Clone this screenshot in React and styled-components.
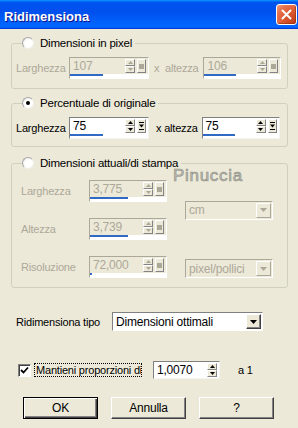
import React from "react";
import styled, { createGlobalStyle } from "styled-components";

const GlobalStyle = createGlobalStyle`
  html, body { margin: 0; padding: 0; background: #ece9d8; }
  body {
    font-family: "Liberation Sans", Arial, sans-serif;
    font-size: 11px;
    letter-spacing: -0.2px;
    color: #000;
  }
`;

const colors = {
  face: "#ece9d8",
  frame: "#d0d0bf",
  disabled: "#aca899",
  shadow: "#848284",
  dark: "#404040",
  bar: "#316ac5",
};

const Window = styled.div`
  position: relative;
  width: 298px;
  height: 428px;
  overflow: hidden;
  background: ${colors.face};
  display: flex;
  flex-direction: column;
`;

const TitleBar = styled.div`
  flex: none;
  height: 29px;
  box-sizing: border-box;
  padding: 0 1px 0 4px;
  display: flex;
  align-items: center;
  justify-content: space-between;
  background: linear-gradient(
    180deg,
    #0997ff,
    #0053ee 8%,
    #0050ee 40%,
    #06f 88%,
    #06f 93%,
    #005bff 95%,
    #003dd7 96%,
    #003dd7
  );
`;

const Title = styled.span`
  padding-top: 3px;
  font-size: 13px;
  font-weight: bold;
  letter-spacing: 0;
  color: #fff;
  text-shadow: 1px 1px 0 #0f1089;
`;

const CloseButton = styled.div`
  width: 21px;
  height: 21px;
  box-sizing: border-box;
  border: 1px solid #fff;
  border-radius: 3px;
  display: flex;
  align-items: center;
  justify-content: center;
  background: radial-gradient(
    circle at 85% 85%,
    #c4431c 0%,
    #de5a31 45%,
    #e8744f 75%,
    #f2a286 100%
  );
  box-shadow: inset -1px -1px 1px rgba(120, 30, 0, 0.5);
`;

const Body = styled.div`
  padding: 7px 10px 0 11px;
  display: flex;
  flex-direction: column;
`;

const Group = styled.fieldset`
  margin: 0 0 ${(p) => p.$mb}px 0;
  padding: ${(p) => p.$pt}px 6px ${(p) => p.$pb}px 3px;
  border: 1px solid ${colors.frame};
  border-radius: 3px;
  min-width: 0;
`;

const Legend = styled.legend`
  margin-left: 7px;
  padding: 0 3px 0 0;
  height: 14px;
  display: flex;
  align-items: center;
  gap: 6px;
  line-height: 14px;
  font-size: 11.5px;
`;

const Radio = styled.span`
  width: 12px;
  height: 12px;
  box-sizing: border-box;
  border-radius: 50%;
  border: 1px solid;
  border-color: #a7a6aa #f0f0ea #f0f0ea #a7a6aa;
  background: radial-gradient(circle at 65% 65%, #fff 45%, #e6e6e0 100%);
  display: flex;
  align-items: center;
  justify-content: center;

  &::after {
    content: "";
    width: 4px;
    height: 4px;
    border-radius: 50%;
    background: ${(p) => (p.$checked ? "#000" : "transparent")};
  }
`;

const Row = styled.div`
  display: flex;
  align-items: center;
  padding-left: ${(p) => p.$pl || 0}px;
`;

const Label = styled.span`
  width: ${(p) => (p.$w ? `${p.$w}px` : "auto")};
  flex: none;
  white-space: nowrap;
  font-size: 11px;
  color: ${(p) => (p.$disabled ? colors.disabled : "#000")};
`;

const XLabel = styled.span`
  margin: 0 ${(p) => p.$r}px 0 ${(p) => p.$l}px;
  white-space: nowrap;
  font-size: 11px;
  color: ${(p) => (p.$disabled ? colors.disabled : "#000")};
`;

const EditBox = styled.div`
  flex: none;
  width: ${(p) => p.$w}px;
  height: ${(p) => p.$h || 22}px;
  box-sizing: border-box;
  display: flex;
  flex-direction: column;
  border: 1px solid;
  border-color: ${(p) =>
    p.$disabled
      ? `${colors.disabled} #fff #fff ${colors.disabled}`
      : `#808080 #f4f4f0 #f4f4f0 #808080`};
  background: ${(p) => (p.$disabled ? colors.face : "#fff")};
`;

const EditRow = styled.div`
  flex: 1;
  display: flex;
  align-items: center;
  padding-right: 2px;
  gap: 2px;
`;

const EditValue = styled.span`
  flex: 1;
  padding-left: 3px;
  font-size: 12px;
  color: ${(p) => (p.$disabled ? colors.disabled : "#000")};
`;

const SpinCol = styled.div`
  width: 10px;
  display: flex;
  flex-direction: column;
`;

const SpinBtn = styled.div`
  height: 7px;
  box-sizing: border-box;
  display: flex;
  align-items: center;
  justify-content: center;
  background: ${colors.face};
  border: 1px solid;
  border-color: #fff ${colors.shadow} ${colors.shadow} #fff;
`;

const PopBtn = styled.div`
  width: 9px;
  height: 14px;
  box-sizing: border-box;
  display: flex;
  align-items: center;
  justify-content: center;
  background: ${colors.face};
  border: 1px solid;
  border-color: #fff ${colors.shadow} ${colors.shadow} #fff;
`;

const DisabledSquare = styled.span`
  width: 5px;
  height: 5px;
  background: ${colors.disabled};
`;

const BarTrack = styled.div`
  height: 4px;
  background: #fff;
  display: flex;
  align-items: flex-start;
`;

const BarFill = styled.div`
  height: 2px;
  background: ${colors.bar};
`;

const PrintGrid = styled.div`
  display: grid;
  grid-template-columns: 50px 78px 88px;
  grid-template-rows: 22px 22px 22px;
  column-gap: 18px;
  row-gap: 16px;
  padding-left: 6px;
  align-items: center;
`;

const ComboBox = styled.div`
  width: ${(p) => p.$w}px;
  height: ${(p) => p.$h || 19}px;
  box-sizing: border-box;
  display: flex;
  align-items: center;
  padding: 0 1px 0 3px;
  border: 1px solid;
  border-color: ${(p) =>
    p.$disabled
      ? `${colors.disabled} #fff #fff ${colors.disabled}`
      : `#808080 #fff #fff #808080`};
  background: ${(p) => (p.$disabled ? colors.face : "#fff")};
  grid-row: ${(p) => p.$row || "auto"};
  grid-column: ${(p) => p.$col || "auto"};
  align-self: ${(p) => p.$align || "center"};
`;

const ComboText = styled.span`
  flex: 1;
  font-size: 12px;
  color: ${(p) => (p.$disabled ? colors.disabled : "#000")};
`;

const DropButton = styled.div`
  width: 15px;
  height: 15px;
  box-sizing: border-box;
  display: flex;
  align-items: center;
  justify-content: center;
  background: ${colors.face};
  border: 1px solid;
  border-color: ${(p) =>
    p.$disabled ? `#fff ${colors.disabled} ${colors.disabled} #fff` : `#fff #404040 #404040 #fff`};
  box-shadow: ${(p) => (p.$disabled ? "none" : `inset -1px -1px 0 ${colors.shadow}`)};
`;

const TypeRow = styled.div`
  margin-top: 24px;
  padding-left: 5px;
  display: flex;
  align-items: center;
  gap: 12px;
`;

const CheckRow = styled.div`
  margin-top: 30px;
  padding-left: 7px;
  display: flex;
  align-items: center;
`;

const CheckBox = styled.span`
  width: 13px;
  height: 13px;
  box-sizing: border-box;
  flex: none;
  border: 1px solid;
  border-color: #808080 #fff #fff #808080;
  box-shadow: inset 1px 1px 0 #404040;
  background: #fff;
  display: flex;
  align-items: center;
  justify-content: center;
`;

const CheckLabel = styled.span`
  margin-left: 4px;
  margin-right: 12px;
  padding: 0 1px;
  width: 104px;
  overflow: hidden;
  white-space: nowrap;
  font-size: 11px;
  outline: 1px dotted #000;
  outline-offset: 0;
`;

const RatioSuffix = styled.span`
  margin-left: 18px;
  font-size: 11px;
`;

const ButtonRow = styled.div`
  margin-top: 18px;
  padding-left: 12px;
  display: flex;
  gap: 13px;
`;

const Button = styled.div`
  width: 75px;
  height: 22px;
  box-sizing: border-box;
  display: flex;
  align-items: center;
  justify-content: center;
  font-size: 12px;
  background: ${colors.face};
  border: 1px solid;
  border-color: ${(p) => (p.$default ? "#000" : `#fff #404040 #404040 #fff`)};
  box-shadow: ${(p) =>
    p.$default
      ? `inset 1px 1px 0 #fff, inset -1px -1px 0 #404040, inset -2px -2px 0 ${colors.shadow}`
      : `inset -1px -1px 0 ${colors.shadow}`};
`;

const Watermark = styled.span`
  position: absolute;
  left: 173px;
  top: 166px;
  font-size: 17px;
  letter-spacing: 0.7px;
  color: #bdbdb4;
  -webkit-text-stroke: 0.6px #8e8e86;
  pointer-events: none;
`;

const Arrow = ({ up, color = "#000" }) => (
  <svg width="5" height="3" viewBox="0 0 5 3">
    <path d={up ? "M2.5 0 L5 3 L0 3 Z" : "M0 0 L5 0 L2.5 3 Z"} fill={color} />
  </svg>
);

const PopGlyph = () => (
  <svg width="5" height="8" viewBox="0 0 5 8">
    <rect x="0" y="0" width="5" height="1" fill="#000" />
    <path d="M0 2.5 L5 2.5 L2.5 5.5 Z" fill="#000" />
    <rect x="0" y="7" width="5" height="1" fill="#000" />
  </svg>
);

const DropArrow = ({ color = "#000" }) => (
  <svg width="7" height="4" viewBox="0 0 7 4">
    <path d="M0 0 L7 0 L3.5 4 Z" fill={color} />
  </svg>
);

const SpinEdit = ({ value, w, fill, disabled, pop = true, bar = true, h }) => {
  const arrow = disabled ? colors.disabled : "#000";
  return (
    <EditBox $w={w} $h={h} $disabled={disabled}>
      <EditRow>
        <EditValue $disabled={disabled}>{value}</EditValue>
        <SpinCol>
          <SpinBtn>
            <Arrow up color={arrow} />
          </SpinBtn>
          <SpinBtn>
            <Arrow color={arrow} />
          </SpinBtn>
        </SpinCol>
        {pop && <PopBtn>{disabled ? <DisabledSquare /> : <PopGlyph />}</PopBtn>}
      </EditRow>
      {bar && (
        <BarTrack>
          <BarFill style={{ width: `${fill}%` }} />
        </BarTrack>
      )}
    </EditBox>
  );
};

const Combo = ({ text, w, disabled, row, col, align }) => (
  <ComboBox $w={w} $disabled={disabled} $row={row} $col={col} $align={align}>
    <ComboText $disabled={disabled}>{text}</ComboText>
    <DropButton $disabled={disabled}>
      <DropArrow color={disabled ? colors.disabled : "#000"} />
    </DropButton>
  </ComboBox>
);

const App = () => (
  <>
    <GlobalStyle />
    <Window>
      <TitleBar>
        <Title>Ridimensiona</Title>
        <CloseButton>
          <svg width="11" height="11" viewBox="0 0 11 11">
            <path d="M1.5 1.5 L9.5 9.5 M9.5 1.5 L1.5 9.5" stroke="#fff" strokeWidth="2" strokeLinecap="round" />
          </svg>
        </CloseButton>
      </TitleBar>

      <Body>
        <Group $pt={7} $pb={9} $mb={7}>
          <Legend>
            <Radio />
            Dimensioni in pixel
          </Legend>
          <Row $pl={1}>
            <Label $w={53} $disabled>Larghezza</Label>
            <SpinEdit value="107" w={80} fill={42} disabled />
            <XLabel $l={5} $r={5} $disabled>x&nbsp;&nbsp;altezza</XLabel>
            <SpinEdit value="106" w={78} fill={42} disabled />
          </Row>
        </Group>

        <Group $pt={7} $pb={7} $mb={9}>
          <Legend>
            <Radio $checked />
            Percentuale di originale
          </Legend>
          <Row $pl={1}>
            <Label $w={53}>Larghezza</Label>
            <SpinEdit value="75" w={80} fill={42} />
            <XLabel $l={7} $r={4}>x altezza</XLabel>
            <SpinEdit value="75" w={78} fill={42} />
          </Row>
        </Group>

        <Group $pt={10} $pb={9} $mb={0}>
          <Legend>
            <Radio />
            Dimensioni attuali/di stampa
          </Legend>
          <PrintGrid>
            <Label $disabled>Larghezza</Label>
            <SpinEdit value="3,775" w={78} fill={50} disabled />
            <Combo text="cm" w={88} disabled row="1 / span 2" col="3" />
            <Label $disabled>Altezza</Label>
            <SpinEdit value="3,739" w={78} fill={50} disabled />
            <Label $disabled>Risoluzione</Label>
            <SpinEdit value="72,000" w={78} fill={2} disabled />
            <Combo text="pixel/pollici" w={88} disabled row="3" col="3" align="end" />
          </PrintGrid>
        </Group>

        <TypeRow>
          <Label>Ridimensiona tipo</Label>
          <Combo text="Dimensioni ottimali" w={151} />
        </TypeRow>

        <CheckRow>
          <CheckBox>
            <svg width="9" height="9" viewBox="0 0 9 9">
              <path d="M1 4 L3.5 6.5 L8 1.5" stroke="#000" strokeWidth="1.8" fill="none" />
            </svg>
          </CheckBox>
          <CheckLabel>Mantieni proporzioni di</CheckLabel>
          <SpinEdit value="1,0070" w={67} h={18} pop={false} bar={false} />
          <RatioSuffix>a 1</RatioSuffix>
        </CheckRow>

        <ButtonRow>
          <Button $default>OK</Button>
          <Button>Annulla</Button>
          <Button>?</Button>
        </ButtonRow>
      </Body>

      <Watermark>Pinuccia</Watermark>
    </Window>
  </>
);

export default App;
